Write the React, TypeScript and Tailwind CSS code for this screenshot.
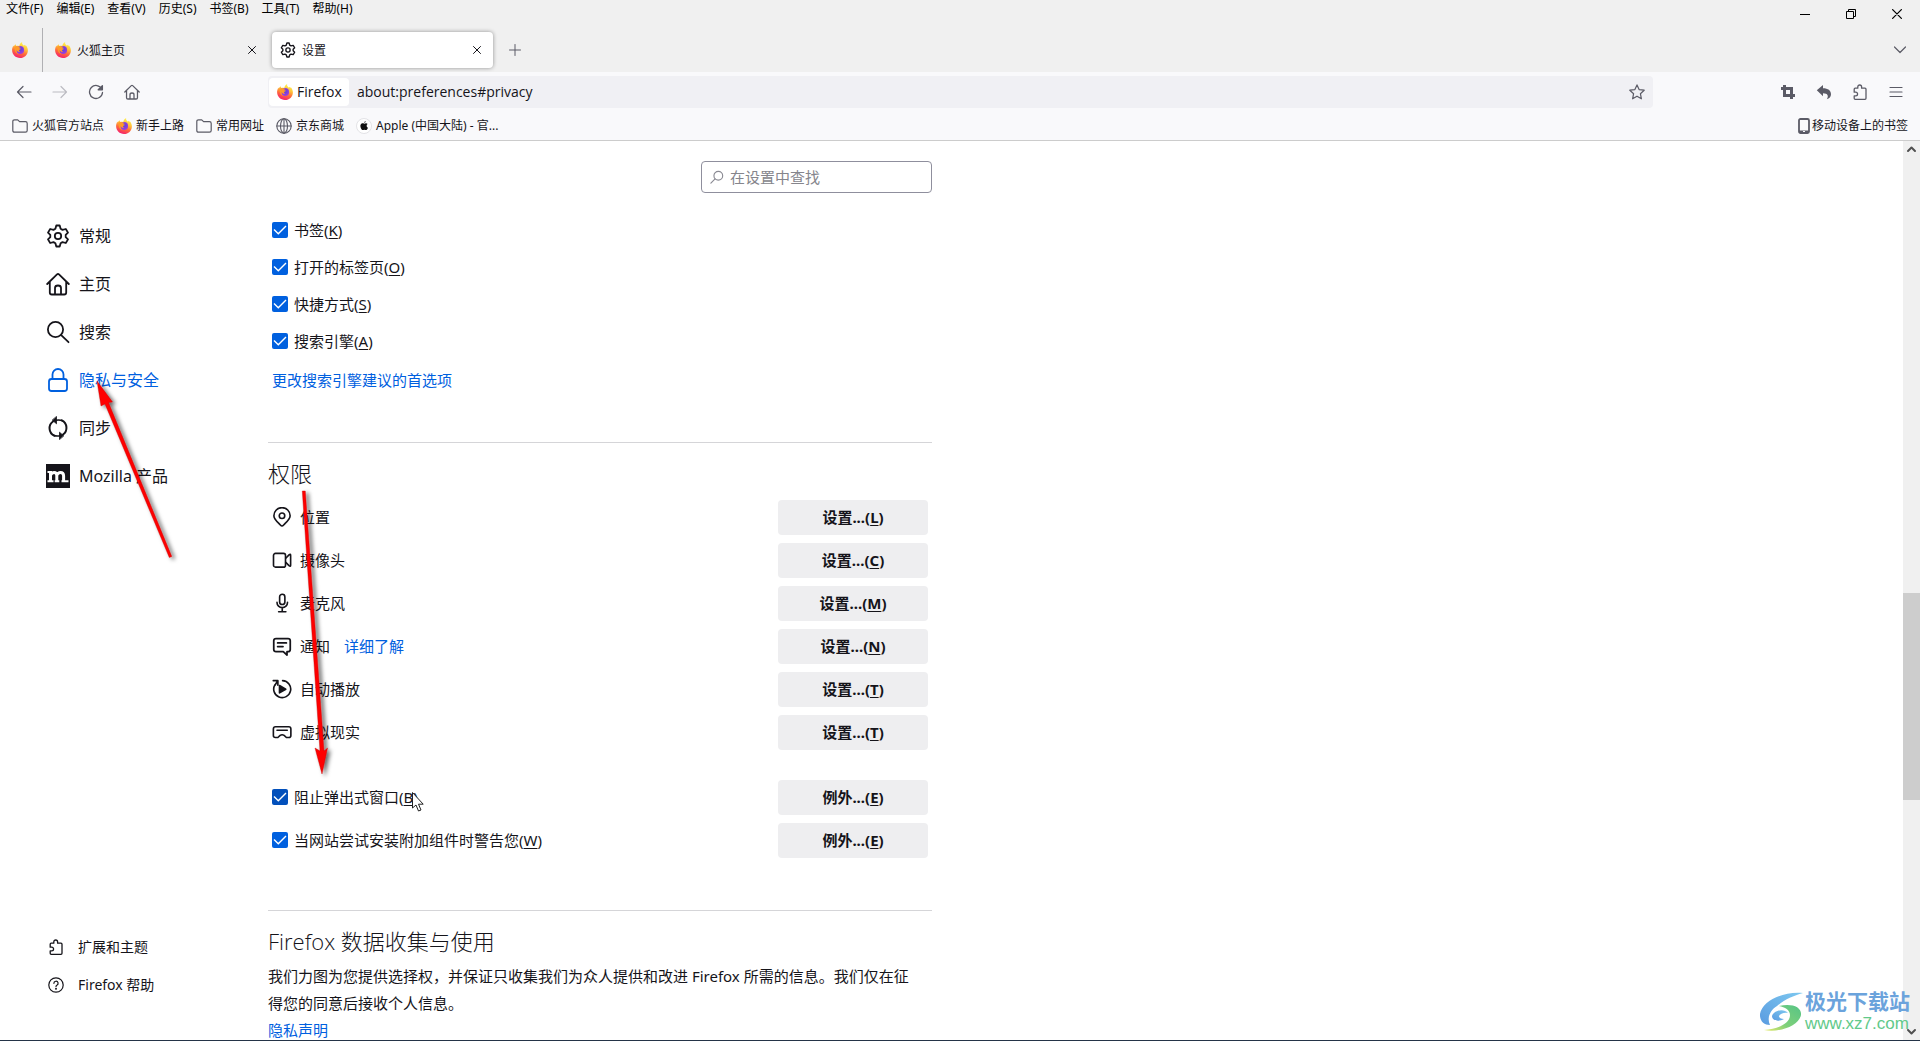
import React, { useId } from "react";

const sans = "font-['Noto_Sans','Noto_Sans_CJK_SC',sans-serif]";

type IconProps = { className?: string };

function FirefoxLogo({ className = "size-4" }: IconProps) {
  const id = useId().replace(/[^a-zA-Z0-9]/g, "");
  return (
    <svg viewBox="0 0 16 16" className={className} aria-hidden="true">
      <defs>
        <linearGradient id={"a" + id} x1="0.75" y1="0.05" x2="0.4" y2="1">
          <stop offset="0" stopColor="#fff44f" />
          <stop offset="0.35" stopColor="#ffc23a" />
          <stop offset="0.65" stopColor="#ff6a3a" />
          <stop offset="1" stopColor="#f5206e" />
        </linearGradient>
        <radialGradient id={"b" + id} cx="0.5" cy="0.4" r="0.6">
          <stop offset="0" stopColor="#5b3fe0" />
          <stop offset="1" stopColor="#a040d8" />
        </radialGradient>
      </defs>
      <path
        fill={"url(#a" + id + ")"}
        d="M10.200 0c-.5 1.400.2 2.300 1.200 3.200l.6.6V2.700c.5.3 1 .9 1.300 1.400.2-.2.200-.8.100-1.200C15 4.200 15.900 6.200 15.900 8.400 15.900 12.600 12.400 16 8 16S.1 12.600.1 8.300c0-1.800.5-3.500 1.400-4.900 0 .4.100.7.200 1C2.200 3.500 2.900 2.700 3.700 2.200c0 .8.200 1.300.7 1.700 1-.2 2-.1 2.800.200C7.400 2.500 8.500.8 10.200 0z"
      />
      <circle cx="8.200" cy="8" r="3.900" fill={"url(#b" + id + ")"} />
      <path
        fill="#ff9a28"
        d="M2.600 4.800c1.300-.9 3-.9 4.200-.2.700-.1 1.500.1 1.900.5-.9.100-1.300.5-1.400 1 .2.500.9.600 1.700.7-.3.800-1.500.9-2 1.400-.3.500.1 1.300 1.200 1.500-1.500.6-3.200-.2-3.500-2-.5 1.700.4 3.800 2.300 4.500C4.300 12 2.300 9.700 2.600 4.800z"
      />
    </svg>
  );
}

function Svg({
  className = "size-4",
  width = 1,
  children,
  box = 16,
}: IconProps & { width?: number; children: React.ReactNode; box?: number }) {
  return (
    <svg
      viewBox={"0 0 " + box + " " + box}
      className={className + " shrink-0"}
      fill="none"
      stroke="currentColor"
      strokeWidth={width}
      strokeLinecap="round"
      strokeLinejoin="round"
      aria-hidden="true"
    >
      {children}
    </svg>
  );
}

const Gear = ({ className, width = 1.8 }: IconProps & { width?: number }) => (
  <Svg box={24} width={width} className={className}>
    <circle cx="12" cy="12" r="3.200" />
    <path d="M10.300 1.500h3.400l.9 3.300 1.900 1.100 3.300-.9 2.200 3.600-2.300 2.200v2.400l2.300 2.200-2.200 3.600-3.300-.9-1.900 1.100-.9 3.300h-3.400l-.9-3.300-1.900-1.100-3.300.9L2 15.400l2.300-2.200v-2.400L2 8.600 4.200 5l3.300.9 1.900-1.100z" />
  </Svg>
);
const Home = ({ className, width = 1.8 }: IconProps & { width?: number }) => (
  <Svg box={24} width={width} className={className}>
    <path d="M1.200 12 11 2.400q1-.9 2 0L22.800 12M3.800 10v10.500q0 2 2 2h12.400q2 0 2-2V10M9 22.300V16q0-2.500 3-2.500t3 2.500v6.300" />
  </Svg>
);
const Search = ({ className }: IconProps) => (
  <Svg box={24} width={1.8} className={className}>
    <circle cx="9.500" cy="9.500" r="7.600" />
    <path d="m15.200 15.200 7.300 7" />
  </Svg>
);
const Lock = ({ className }: IconProps) => (
  <Svg box={24} width={1.8} className={className}>
    <rect x="3" y="11" width="18" height="12" rx="2.500" />
    <path d="M6.500 11V6.500a5.500 5.500 0 0 1 11 0V11" />
  </Svg>
);
const Sync = ({ className }: IconProps) => (
  <Svg box={24} width={2} className={className}>
    <path d="M7 5.500a8.300 8.300 0 0 0 1.200 14.200M17 18.500A8.300 8.300 0 0 0 15.800 4.300" />
    <path d="m10.500 .8v7l-4-3.500zM13.500 23.200v-7l4 3.500z" fill="currentColor" strokeWidth="0.8" />
    <path d="M10 4.200q4-.6 6.500.6M14 19.800q-4 .6-6.500-.6" strokeWidth="1.600" />
  </Svg>
);
const Mozilla = ({ className = "size-6" }: IconProps) => (
  <svg viewBox="0 0 24 24" className={className + " shrink-0"} aria-hidden="true">
    <rect width="24" height="24" fill="#15141a" />
    <path
      d="M1.500 8H5M1.500 17.200h6M8.700 17.200h4.600M15.500 17.200H22.500"
      fill="none"
      stroke="#fff"
      strokeWidth="2"
    />
    <path
      d="M4.500 7v10M4.500 11.200q1.300-2.700 3.600-2.700 2.700 0 2.700 3V17M10.800 11.200q1.300-2.700 3.600-2.700 3.200 0 3.200 3.200V17"
      fill="none"
      stroke="#fff"
      strokeWidth="3"
    />
  </svg>
);
const Puzzle = ({ className }: IconProps) => (
  <Svg width={1.3} className={className}>
    <path d="M2.200 8.200V5.200q0-1 1-1h2.600V2.900a1.900 1.900 0 0 1 3.800 0v1.300H13q1 0 1 1v9.100q0 1-1 1H3.200q-1 0-1-1v-2.400h1.500a1.850 1.850 0 0 0 0-3.700z" />
  </Svg>
);
const Help = ({ className }: IconProps) => (
  <Svg width={1.2} className={className}>
    <circle cx="8" cy="8" r="7.200" />
    <path d="M5.900 6.300a2.100 2.100 0 1 1 3 1.900q-.9.500-.9 1.400" />
    <circle cx="8" cy="11.800" r=".4" fill="currentColor" />
  </Svg>
);
const Folder = ({ className }: IconProps) => (
  <Svg width={1.2} className={className}>
    <path d="M.8 12.500v-9q0-1.700 1.700-1.700h3.200l1.900 1.900h5.900q1.700 0 1.700 1.700v7.100q0 1.700-1.700 1.700h-11q-1.700 0-1.700-1.700z" />
  </Svg>
);
const Globe = ({ className }: IconProps) => (
  <Svg width={1.1} className={className}>
    <circle cx="8" cy="8" r="7.200" />
    <ellipse cx="8" cy="8" rx="3.500" ry="7.200" />
    <path d="M.8 8h14.400M8 .8v14.400" />
  </Svg>
);
const Apple = ({ className = "size-4" }: IconProps) => (
  <svg viewBox="0 0 16 16" className={className} aria-hidden="true">
    <circle cx="8" cy="8" r="7.500" fill="#fff" stroke="#dcdce0" strokeWidth="0.8" />
    <path
      fill="#111"
      d="M9.700 3q.1 1.500-1.500 2.100Q8.100 3.600 9.700 3zM8.200 5.700c.6 0 1-.4 1.800-.4.700 0 1.300.3 1.600.8-1.500.9-1.200 3 .3 3.600-.4 1.200-1.200 2.400-2 2.400-.6 0-.9-.3-1.600-.3s-1 .3-1.600.3C5.400 12.100 3.700 8 4.700 6.400c.8-1.300 2.200-1.200 3.500-.7z"
    />
  </svg>
);
const Close = ({ className = "size-2" }: IconProps) => (
  <Svg box={8} width={1} className={className}>
    <path d="m.5.5 7 7m0-7-7 7" />
  </Svg>
);

const permIcons: Record<string, React.ReactNode> = {
  location: (
    <Svg width={1.3} className="size-5">
      <path d="M8 15.200q-.6 0-1.300-.8C4.600 12.200 1.500 9.800 1.500 7a6.500 6.500 0 0 1 13 0c0 2.800-3.100 5.200-5.200 7.400q-.7.800-1.300.8z" />
      <circle cx="8" cy="7" r="2.200" />
    </Svg>
  ),
  camera: (
    <Svg width={1.3} className="size-5">
      <rect x="1.200" y="2.700" width="9.600" height="11" rx="1.600" />
      <path d="m11 6.600 2.600-2.700q1.300-1 1.300.4v7.800q0 1.400-1.300.4L11 9.900" />
    </Svg>
  ),
  mic: (
    <Svg width={1.3} className="size-5">
      <rect x="6.100" y="1" width="4.200" height="8.200" rx="2.100" />
      <path d="M4 7.500a4.200 4.200 0 0 0 8.400 0M8.200 11.800V15M5.300 15h5.800" />
    </Svg>
  ),
  notify: (
    <Svg width={1.4} className="size-5">
      <path d="M12 12.500v2.700l-3-2.700H3.200q-1.800 0-1.800-1.800V3.800Q1.400 2 3.200 2h9.600q1.800 0 1.800 1.800v6.900q0 1.800-1.800 1.800zM4.500 5.500h7M4.500 8.400h4.300" />
    </Svg>
  ),
  autoplay: (
    <Svg width={1.3} className="size-5">
      <path d="M8.500 1.300a6.800 6.800 0 1 1-6.100 3.200M1 1.300h3.700v3.600M2.200 5.200l2.300-3.600" />
      <path d="M6 5.200v5.900l5-2.900z" fill="currentColor" />
    </Svg>
  ),
  vr: (
    <Svg width={1.3} className="size-5">
      <path d="M2.800 3.800h10.600q1.700 0 1.700 1.700v5.300q0 1.600-1.600 1.600h-2L9.700 10.700q-1.600-1-3.200 0l-1.800 1.700h-2q-1.600 0-1.600-1.600V5.500q0-1.700 1.700-1.700zM4 6.600h8.200" />
    </Svg>
  ),
};

function Key({ letter }: { letter: string }) {
  return (
    <>
      (<span className="underline underline-offset-2">{letter}</span>)
    </>
  );
}

function Check({ text, letter, pressed = false }: { text: string; letter: string; pressed?: boolean }) {
  return (
    <label className="flex items-center gap-1.5 text-[15px] leading-5">
      <span className="grid size-4 shrink-0">
        <input
          type="checkbox"
          defaultChecked
          className={
            "col-start-1 row-start-1 size-4 appearance-none rounded-xs " +
            (pressed ? "bg-[#0250bb]" : "bg-[#0060df]")
          }
        />
        <svg viewBox="0 0 16 16" className="pointer-events-none col-start-1 row-start-1 size-4" aria-hidden="true">
          <path d="m2 7.500 4.300 4.300L14 4" fill="none" stroke="#fff" strokeWidth="1.400" />
        </svg>
      </span>
      <span>
        {text}
        <Key letter={letter} />
      </span>
    </label>
  );
}

function SettingButton({ text, letter }: { text: string; letter: string }) {
  return (
    <button type="button" className="h-[35px] w-[150px] rounded bg-[#eeeef0] text-[15px] leading-5 font-bold">
      {text}
      <Key letter={letter} />
    </button>
  );
}

const menus = ["文件(F)", "编辑(E)", "查看(V)", "历史(S)", "书签(B)", "工具(T)", "帮助(H)"];

const permissions = [
  { icon: "location", text: "位置", key: "L" },
  { icon: "camera", text: "摄像头", key: "C" },
  { icon: "mic", text: "麦克风", key: "M" },
  { icon: "notify", text: "通知", key: "N", more: "详细了解" },
  { icon: "autoplay", text: "自动播放", key: "T" },
  { icon: "vr", text: "虚拟现实", key: "T" },
];

const categories = [
  { icon: <Gear className="size-6" />, text: "常规" },
  { icon: <Home className="size-6" />, text: "主页" },
  { icon: <Search className="size-6" />, text: "搜索" },
  { icon: <Lock className="size-6" />, text: "隐私与安全", active: true },
  { icon: <Sync className="size-6" />, text: "同步" },
  { icon: <Mozilla />, text: "Mozilla 产品" },
];

function TitleBar() {
  return (
    <header className="flex h-7 items-start justify-between bg-[#f0f0f0] text-black">
      <nav className="flex gap-px">
        {menus.map((m) => (
          <button key={m} type="button" className="px-1.5 text-xs leading-[18px]">
            {m}
          </button>
        ))}
      </nav>
      <div className="flex h-7 items-center">
        <button type="button" aria-label="最小化" className="grid h-7 w-[46px] place-items-center">
          <span className="h-px w-2.5 bg-black" />
        </button>
        <button type="button" aria-label="还原" className="grid h-7 w-[46px] place-items-center">
          <svg viewBox="0 0 10 10" className="size-2.5" fill="none" stroke="#000" aria-hidden="true">
            <path d="M.5 2.500h7v7h-7zM2.500 2.500v-2h7v7h-2" />
          </svg>
        </button>
        <button type="button" aria-label="关闭" className="grid h-7 w-[46px] place-items-center">
          <Close className="size-2.5" />
        </button>
      </div>
    </header>
  );
}

function TabStrip() {
  return (
    <div className="flex h-11 items-center bg-[#f0f0f0] text-xs text-[#15141a]">
      <button type="button" aria-label="Firefox View" className="flex h-11 w-[43px] items-center border-r border-[#b0b0b3] pl-3">
        <FirefoxLogo />
      </button>
      <div className="flex h-9 w-[229px] items-center gap-1.5 pr-4 pl-3">
        <FirefoxLogo />
        <span className="grow pt-px">火狐主页</span>
        <button type="button" aria-label="关闭标签页">
          <Close />
        </button>
      </div>
      <div className="flex h-9 w-[221px] items-center gap-1.5 rounded bg-white pr-3 pl-2 shadow-[0_0_4px_rgba(0,0,0,0.4)]">
        <Gear className="size-4" width={2} />
        <span className="grow pt-px">设置</span>
        <button type="button" aria-label="关闭标签页">
          <Close />
        </button>
      </div>
      <button type="button" aria-label="打开新标签页" className="ml-4 text-[#5b5b66]">
        <Svg className="size-3" box={12}>
          <path d="M6 .5v11M.5 6h11" />
        </Svg>
      </button>
      <button type="button" aria-label="列出所有标签页" className="mr-3.5 ml-auto text-[#5b5b66]">
        <Svg className="size-3" box={12} width={1.2}>
          <path d="m.5 3 5.500 5.500L11.500 3" />
        </Svg>
      </button>
    </div>
  );
}

function NavBar() {
  return (
    <div className="flex h-10 items-center bg-[#f9f9fb] text-[#5b5b66]">
      <div className="flex w-[268px] items-center gap-5 pl-4">
        <button type="button" aria-label="后退">
          <Svg width={1.200}>
            <path d="M15 8H1.500M7 2.500 1.500 8 7 13.500" />
          </Svg>
        </button>
        <button type="button" aria-label="前进" className="text-[#bcbcc2]">
          <Svg width={1.200}>
            <path d="M1 8h13.500M9 2.500 14.500 8 9 13.500" />
          </Svg>
        </button>
        <button type="button" aria-label="刷新">
          <Svg width={1.300}>
            <path d="M13.800 5A6.500 6.500 0 1 0 14.500 8.500" />
            <path d="M14.400 1.600v4.200h-4.200z" fill="currentColor" />
          </Svg>
        </button>
        <button type="button" aria-label="主页">
          <Home className="size-4" width={1.900} />
        </button>
      </div>
      <div className="mr-[127px] flex h-8 grow items-center rounded bg-[#f0f0f4] pl-px font-['Open_Sans','Noto_Sans_CJK_SC',sans-serif] text-sm text-[#15141a]">
        <div className="flex h-7 w-20 items-center gap-1 rounded-sm bg-white pl-2">
          <FirefoxLogo />
          <span>Firefox</span>
        </div>
        <input
          aria-label="地址"
          defaultValue="about:preferences#privacy"
          className="min-w-0 grow bg-transparent pl-2 outline-none"
        />
        <button type="button" aria-label="添加书签" className="mr-2 text-[#5b5b66]">
          <Svg width={1.200}>
            <path d="m8 .9 2.100 4.700 5.100.6-3.800 3.500 1 5.100L8 12.200l-4.400 2.600 1-5.100L.8 6.200l5.100-.6z" />
          </Svg>
        </button>
      </div>
      <div className="flex items-center gap-5 pr-4">
        <button type="button" aria-label="截图">
          <svg viewBox="0 0 16 16" className="size-4" fill="none" stroke="currentColor" strokeWidth="3" aria-hidden="true">
            <path d="M4.500 1v10.500H15M1 4.500h10.500V15" />
          </svg>
        </button>
        <button type="button" aria-label="撤销">
          <svg viewBox="0 0 16 16" className="size-4" fill="currentColor" aria-hidden="true">
            <path d="M.8 6.300 7 1v3.200c5 0 8 2.300 8 6 0 2.600-1.700 4.200-4.200 5 2-3 1.300-6-3.800-6v3z" />
          </svg>
        </button>
        <button type="button" aria-label="扩展">
          <Puzzle />
        </button>
        <button type="button" aria-label="打开应用程序菜单">
          <Svg width={1.200}>
            <path d="M2 3.500h12M2 8h12M2 12.500h12" />
          </Svg>
        </button>
      </div>
    </div>
  );
}

function Bookmarks() {
  const items = [
    { icon: <Folder />, text: "火狐官方站点" },
    { icon: <FirefoxLogo />, text: "新手上路" },
    { icon: <Folder />, text: "常用网址" },
    { icon: <Globe />, text: "京东商城" },
    { icon: <Apple />, text: "Apple (中国大陆) - 官..." },
  ];
  return (
    <div className="flex h-[29px] items-center border-b border-[#cccccc] bg-[#f9f9fb] px-3 text-xs text-[#15141a]">
      <div className="flex items-center gap-3">
        {items.map((b) => (
          <a key={b.text} href="#" className="flex items-center gap-1">
            <span className="text-[#5b5b66]">{b.icon}</span>
            {b.text}
          </a>
        ))}
      </div>
      <a href="#" className="ml-auto flex items-center">
        <svg viewBox="0 0 16 16" className="size-4 text-[#5b5b66]" fill="none" stroke="currentColor" strokeWidth="1.800" aria-hidden="true">
          <rect x="3" y="1" width="10" height="14" rx="1.500" />
          <path d="M3 13.500h10" strokeWidth="2" />
          <path d="M7 13.500h2" stroke="#f9f9fb" strokeWidth="1" />
        </svg>
        移动设备上的书签
      </a>
    </div>
  );
}

function Sidebar() {
  return (
    <aside className="flex w-[268px] shrink-0 flex-col justify-between pt-[71px] pb-9 pl-[46px]">
      <nav className="flex flex-col">
        {categories.map((c) => (
          <a
            key={c.text}
            href="#"
            className={"flex h-12 items-center gap-[9px] text-base " + (c.active ? "text-[#0060df]" : "")}
          >
            {c.icon}
            {c.text}
          </a>
        ))}
      </nav>
      <nav className="flex flex-col text-sm">
        <a href="#" className="flex h-[38px] items-center gap-3.5 pl-0.5">
          <Puzzle />
          扩展和主题
        </a>
        <a href="#" className="flex h-[38px] items-center gap-3.5 pl-0.5">
          <Help />
          Firefox 帮助
        </a>
      </nav>
    </aside>
  );
}

const headingStyle =
  "pt-3.5 text-[22px] leading-8 font-light font-['Open_Sans','Noto_Sans_CJK_SC',sans-serif]";

function Preferences() {
  return (
    <main className="w-[664px] shrink-0">
      <div className="flex justify-end pt-5">
        <label className="flex h-8 w-[231px] items-center gap-1.5 rounded border border-[#8f8f9d] pl-2 text-[#8a8a93]">
          <Svg className="size-3.5" width={1.300}>
            <circle cx="9.500" cy="6.500" r="5" />
            <path d="M5.800 10.200 1 15" />
          </Svg>
          <input
            type="search"
            aria-label="在设置中查找"
            placeholder="在设置中查找"
            className="min-w-0 grow bg-transparent text-[15px] leading-5 outline-none placeholder:text-[#85858c]"
          />
        </label>
      </div>

      <section className="flex flex-col gap-[17px] pt-[27px] pl-1">
        <Check text="书签" letter="K" />
        <Check text="打开的标签页" letter="O" />
        <Check text="快捷方式" letter="S" />
        <Check text="搜索引擎" letter="A" />
        <a href="#" className="mt-0.5 text-[15px] leading-5 text-[#0060df]">
          更改搜索引擎建议的首选项
        </a>
      </section>

      <section className="mt-[52px] border-t border-[#d5d5d8] pr-1">
        <h2 className={headingStyle}>权限</h2>
        <div className="flex flex-col gap-2 pt-[11px]">
          {permissions.map((p) => (
            <div key={p.text} className="flex items-center justify-between pl-1 text-[15px] leading-5">
              <div className="flex items-center gap-2">
                {permIcons[p.icon]}
                <span>{p.text}</span>
                {p.more && (
                  <a href="#" className="ml-1.5 text-[#0060df]">
                    {p.more}
                  </a>
                )}
              </div>
              <SettingButton text="设置..." letter={p.key} />
            </div>
          ))}
        </div>
        <div className="flex flex-col gap-2 pt-[30px]">
          <div className="flex items-center justify-between pl-1">
            <Check text="阻止弹出式窗口" letter="B" pressed />
            <SettingButton text="例外..." letter="E" />
          </div>
          <div className="flex items-center justify-between pl-1">
            <Check text="当网站尝试安装附加组件时警告您" letter="W" />
            <SettingButton text="例外..." letter="E" />
          </div>
        </div>
      </section>

      <section className="mt-[52px] border-t border-[#d5d5d8]">
        <h2 className={headingStyle}>Firefox 数据收集与使用</h2>
        <p className="pt-1.5 pr-4 text-[15px] leading-[27px]">
          我们力图为您提供选择权，并保证只收集我们为众人提供和改进 Firefox 所需的信息。我们仅在征得您的同意后接收个人信息。
        </p>
        <a href="#" className="text-[15px] leading-[27px] text-[#0060df]">
          隐私声明
        </a>
      </section>
    </main>
  );
}

function ScrollBar() {
  return (
    <div className="flex w-[17px] shrink-0 flex-col items-center bg-[#f0f0f0] text-[#505050]">
      <Svg className="size-[17px]" box={17} width={2}>
        <path d="m5 10 3.500-3.500L12 10" />
      </Svg>
      <div className="grow-[435]" />
      <div className="w-full grow-[207] bg-[#cdcdcd]" />
      <div className="grow-[223]" />
      <Svg className="size-[17px]" box={17} width={2}>
        <path d="m5 7 3.500 3.500L12 7" />
      </Svg>
    </div>
  );
}

function Annotations() {
  return (
    <svg
      width="460"
      height="840"
      viewBox="0 0 460 840"
      className="pointer-events-none absolute top-0 left-0"
      aria-hidden="true"
    >
      <defs>
        <filter id="drop" x="-50%" y="-10%" width="220%" height="130%">
          <feDropShadow dx="3" dy="2" stdDeviation="2" floodColor="#000" floodOpacity="0.6" />
        </filter>
      </defs>
      <g fill="#fe0000" stroke="#c00000" strokeWidth="0.4" filter="url(#drop)">
        <path d="m97 381 15.500 21-4 .5L171.800 556.500l-2.500 1L105 404l-4 2z" />
        <path d="m322 774-7-26 5 3L302.300 491h3L324 751l3.500-3z" />
      </g>
      <path
        d="m412.500 792.500v15.500l3.500-3 2.500 6 2.500-1-2.500-5.800h4.700z"
        fill="#fff"
        stroke="#222"
        strokeWidth="1"
      />
    </svg>
  );
}

function Watermark() {
  return (
    <div className="pointer-events-none absolute right-2.5 bottom-[7px] flex items-center font-['Liberation_Sans','Noto_Sans_CJK_SC',sans-serif]">
      <svg viewBox="0 0 46 42" className="h-[42px] w-[46px]" aria-hidden="true">
        <defs>
          <linearGradient id="swirlBlue" x1="1" y1="0" x2="0" y2="1">
            <stop offset="0" stopColor="#7dc8f0" />
            <stop offset="1" stopColor="#5a9be0" />
          </linearGradient>
          <linearGradient id="swirlGreen" x1="1" y1="0" x2="0" y2="1">
            <stop offset="0" stopColor="#56c486" />
            <stop offset="0.600" stopColor="#7fd07a" />
            <stop offset="1" stopColor="#e8ea6a" />
          </linearGradient>
        </defs>
        <path fill="url(#swirlBlue)" d="M44 2C24 0 3 10 1 23c-.5 7 4 11 10 11-3-6-1-14 7-19C26 8 34 5 44 2z" />
        <path fill="url(#swirlBlue)" d="M29 22c-4-5-14-3-16 3 0 5 7 6 12 3-3 0-5-1-5-3 1-2 5-4 9-3z" />
        <path fill="url(#swirlGreen)" d="M20 15c13-3 23 1 22 9C40 35 20 42 5 39c15-1 26-7 26-15 0-5-5-8-11-9z" />
      </svg>
      <div className="flex flex-col">
        <span className="text-[21px] leading-6 font-bold text-[#6ba3dc]">极光下载站</span>
        <span className="text-[17px] leading-5 text-[#62c98a]">www.xz7.com</span>
      </div>
    </div>
  );
}

export default function App() {
  return (
    <div className={"relative flex h-screen flex-col overflow-hidden bg-white text-[#15141a] " + sans}>
      <TitleBar />
      <TabStrip />
      <NavBar />
      <Bookmarks />
      <div className="flex min-h-0 grow overflow-hidden border-b border-[#243447]">
        <Sidebar />
        <Preferences />
        <div className="grow" />
        <ScrollBar />
      </div>
      <Annotations />
      <Watermark />
    </div>
  );
}
